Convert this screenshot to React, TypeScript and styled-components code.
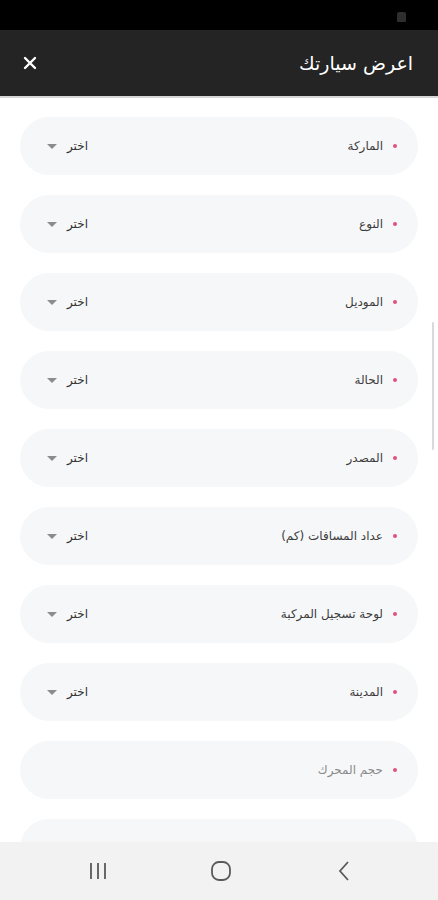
import React from 'react';
import styled, { createGlobalStyle } from 'styled-components';

const GlobalStyle = createGlobalStyle`
  html, body {
    margin: 0;
    padding: 0;
    background: #ffffff;
  }
  body {
    font-family: "DejaVu Sans", "Noto Sans", sans-serif;
  }
`;

const fieldHeight = 58;
const fieldGap = 20;

const Screen = styled.div`
  position: relative;
  width: 438px;
  height: 900px;
  overflow: hidden;
  background: #ffffff;
  direction: rtl;
`;

const StatusBar = styled.div`
  height: 30px;
  background: #000000;
  display: flex;
  align-items: center;
  padding-right: 32px;
`;

const StatusIcon = styled.div`
  width: 9px;
  height: 10px;
  margin-top: 4px;
  background: #2e2e2e;
  border-radius: 2px 2px 1px 1px;
`;

const AppBar = styled.header`
  height: 66px;
  background: #242424;
  border-bottom: 2px solid #d6d6d6;
  display: flex;
  align-items: center;
  justify-content: space-between;
  padding: 0 25px 0 22px;
`;

const Title = styled.h1`
  margin: 0;
  color: #ffffff;
  font-size: 19px;
  font-weight: normal;
`;

const CloseButton = styled.button`
  border: none;
  background: none;
  padding: 0;
  width: 16px;
  height: 16px;
  display: flex;
  align-items: center;
  justify-content: center;
`;

const Form = styled.div`
  display: flex;
  flex-direction: column;
  gap: ${fieldGap}px;
  padding: 19px 20px 0 20px;
`;

const Field = styled.div`
  height: ${fieldHeight}px;
  border-radius: ${fieldHeight / 2}px;
  background: #f6f7f9;
  display: flex;
  align-items: center;
  justify-content: space-between;
  padding: 0 21px 0 27px;
`;

const LabelGroup = styled.div`
  display: flex;
  align-items: center;
  gap: 10px;
`;

const Bullet = styled.span`
  width: 4px;
  height: 4px;
  border-radius: 50%;
  background: #e0527a;
`;

const Label = styled.span<{ $muted?: boolean }>`
  font-size: 12px;
  color: ${(p) => (p.$muted ? '#8a8a8a' : '#3c3c3c')};
`;

const Select = styled.div`
  display: flex;
  align-items: center;
  gap: 10px;
`;

const SelectText = styled.span`
  font-size: 12px;
  color: #333333;
`;

const Caret = styled.span`
  width: 0;
  height: 0;
  border-left: 5px solid transparent;
  border-right: 5px solid transparent;
  border-top: 5px solid #8c8c8c;
`;

const EdgeHandle = styled.div`
  position: absolute;
  right: 4px;
  top: 322px;
  width: 2px;
  height: 128px;
  border-radius: 2px;
  background: #d9d9d9;
`;

const NavBar = styled.nav`
  position: absolute;
  left: 0;
  right: 0;
  bottom: 0;
  height: 58px;
  background: #f2f2f2;
  display: flex;
  align-items: center;
  justify-content: space-between;
  direction: ltr;
  padding: 0 64px 0 68px;
`;

const NavButton = styled.div`
  width: 60px;
  height: 40px;
  display: flex;
  align-items: center;
  justify-content: center;
`;

type FieldItem = {
  label: string;
  select?: boolean;
  muted?: boolean;
};

const fields: FieldItem[] = [
  { label: 'الماركة', select: true },
  { label: 'النوع', select: true },
  { label: 'الموديل', select: true },
  { label: 'الحالة', select: true },
  { label: 'المصدر', select: true },
  { label: 'عداد المسافات (كم)', select: true },
  { label: 'لوحة تسجيل المركبة', select: true },
  { label: 'المدينة', select: true },
  { label: 'حجم المحرك', muted: true },
  { label: 'نوع ناقل الحركة', select: true },
];

const App: React.FC = () => (
  <Screen>
    <GlobalStyle />
    <StatusBar>
      <StatusIcon />
    </StatusBar>
    <AppBar>
      <Title>اعرض سيارتك</Title>
      <CloseButton type="button" aria-label="close">
        <svg width="14" height="14" viewBox="0 0 14 14">
          <path d="M2 2L12 12M12 2L2 12" stroke="#ffffff" strokeWidth="2.4" strokeLinecap="round" />
        </svg>
      </CloseButton>
    </AppBar>
    <Form>
      {fields.map((f) => (
        <Field key={f.label}>
          <LabelGroup>
            <Bullet />
            <Label $muted={f.muted}>{f.label}</Label>
          </LabelGroup>
          {f.select && (
            <Select>
              <SelectText>اختر</SelectText>
              <Caret />
            </Select>
          )}
        </Field>
      ))}
    </Form>
    <EdgeHandle />
    <NavBar>
      <NavButton>
        <svg width="22" height="18" viewBox="0 0 22 18">
          <path d="M4 1V17M11 1V17M18 1V17" stroke="#5a5a5a" strokeWidth="1.8" />
        </svg>
      </NavButton>
      <NavButton>
        <svg width="22" height="22" viewBox="0 0 22 22">
          <rect x="2" y="2" width="18" height="18" rx="7" fill="none" stroke="#5a5a5a" strokeWidth="1.8" />
        </svg>
      </NavButton>
      <NavButton>
        <svg width="14" height="22" viewBox="0 0 14 22">
          <path d="M11 2L3 11L11 20" fill="none" stroke="#5a5a5a" strokeWidth="1.8" />
        </svg>
      </NavButton>
    </NavBar>
  </Screen>
);

export default App;
